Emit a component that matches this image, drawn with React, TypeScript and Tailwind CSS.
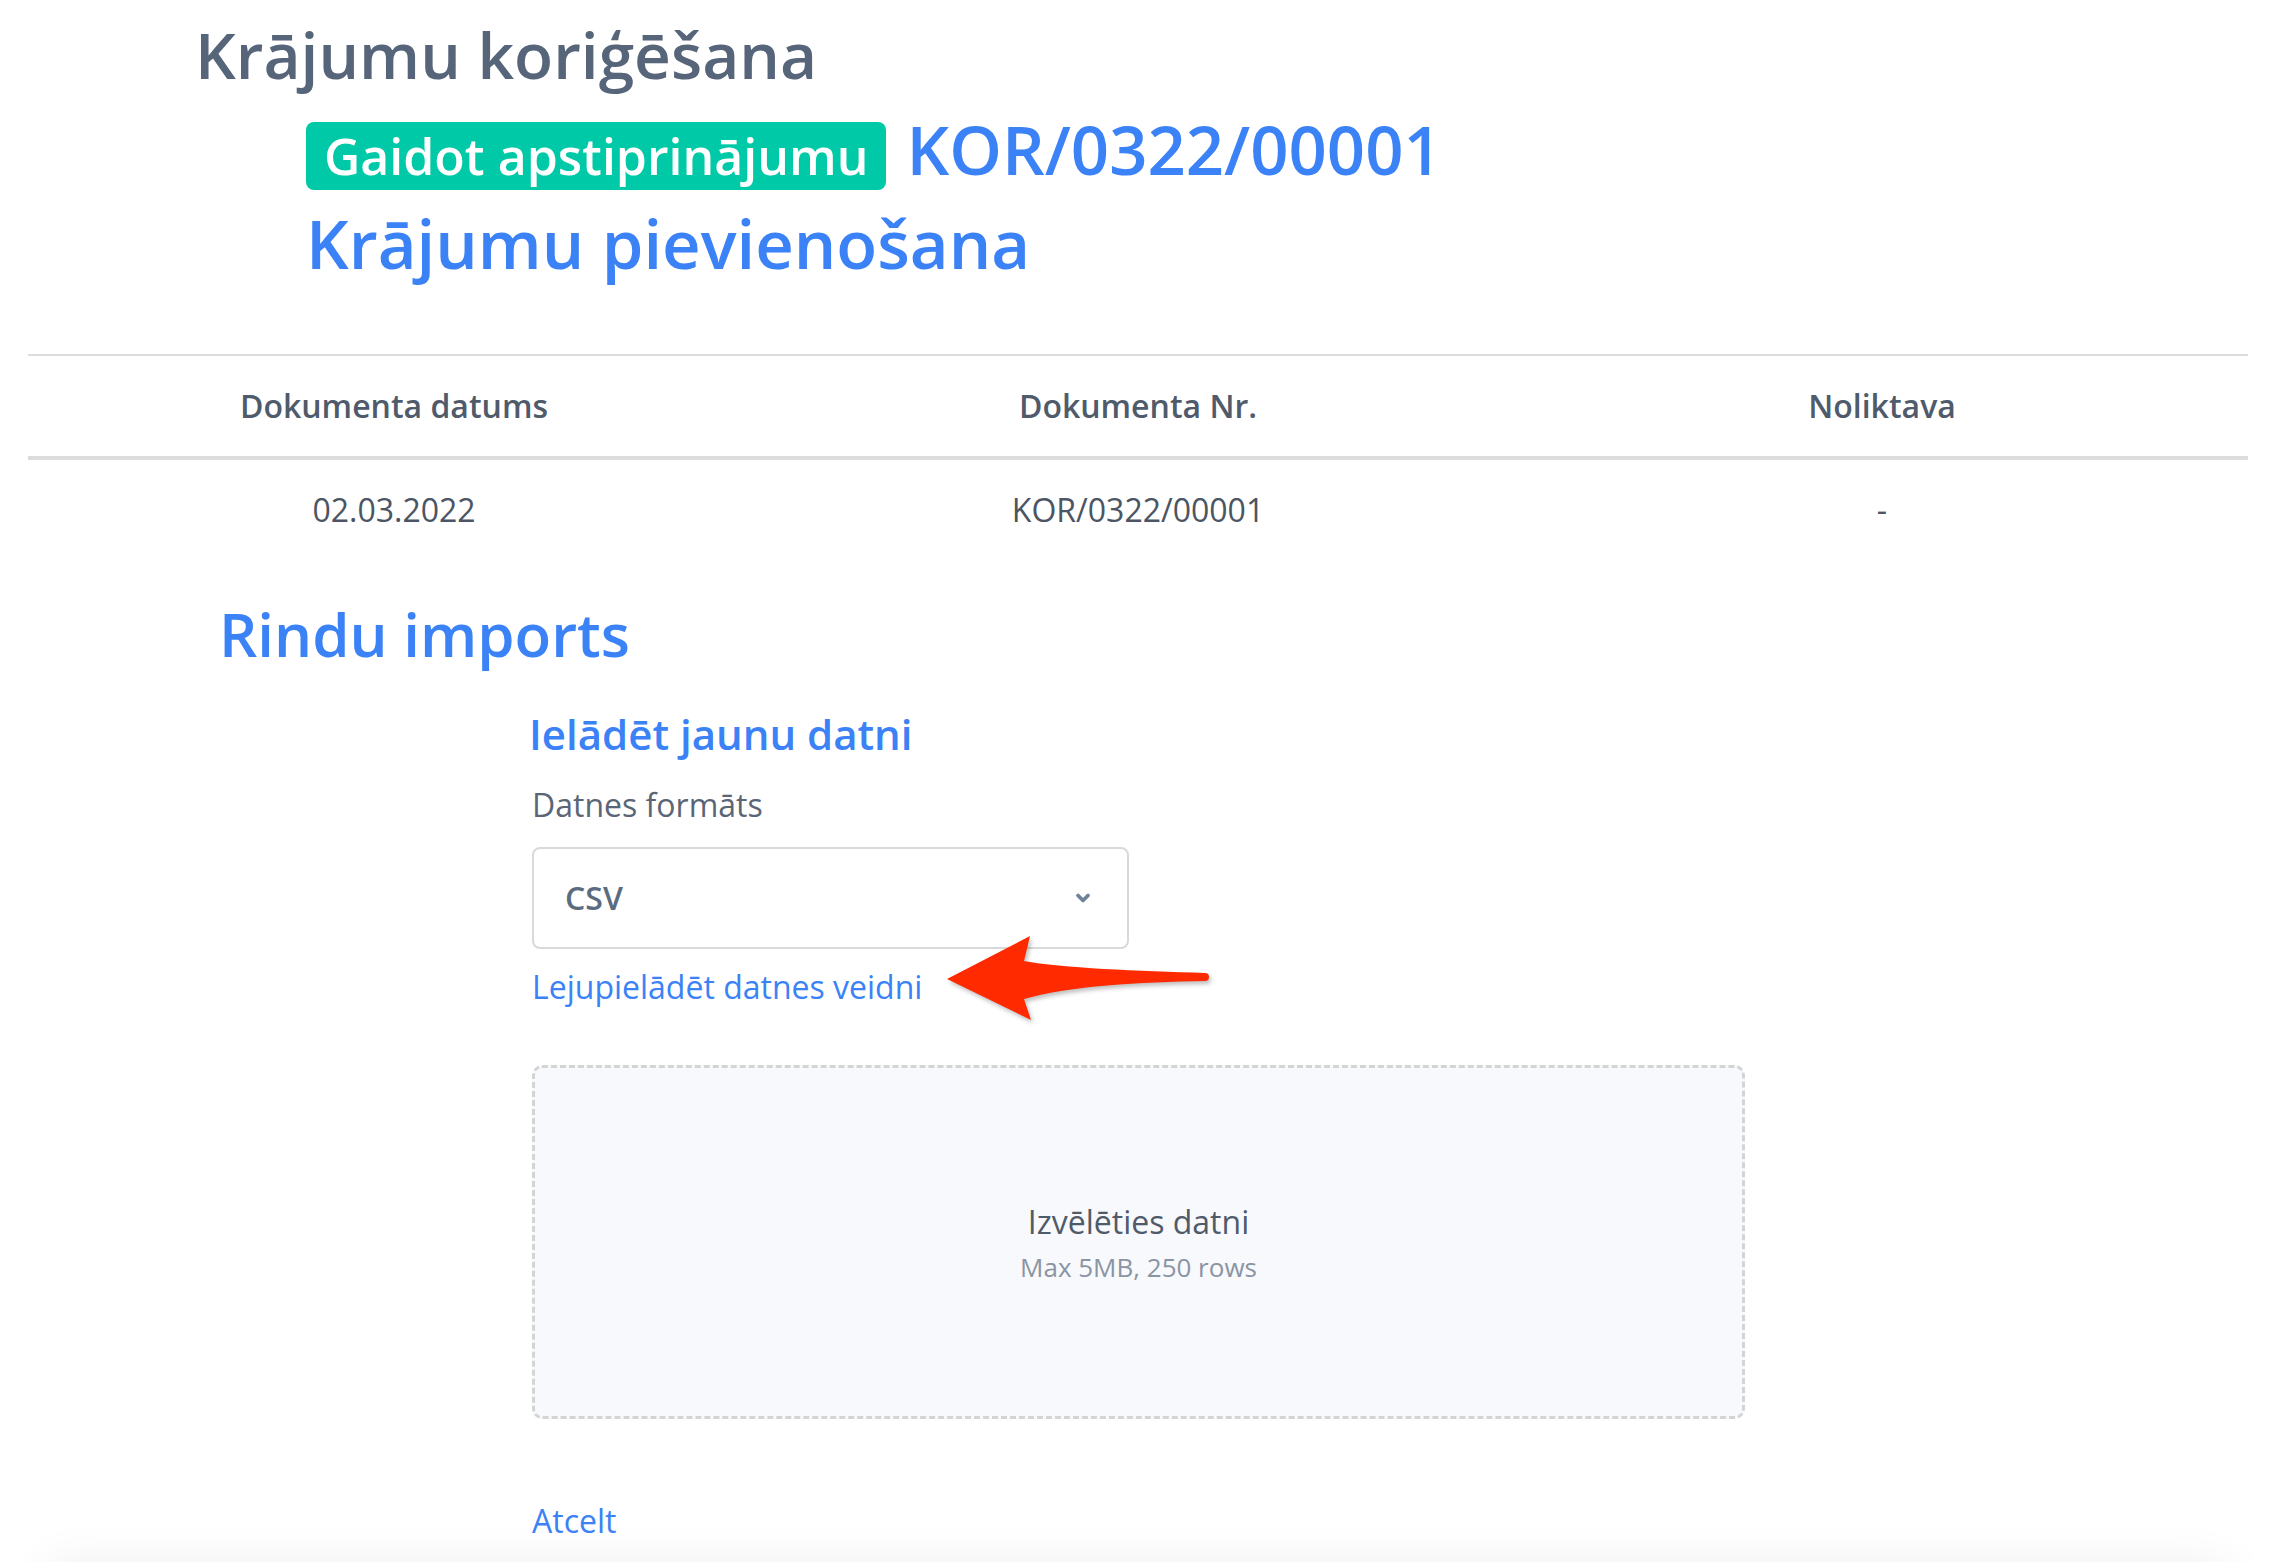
import { ChevronDown } from 'lucide-react'

const columns = [
  { label: 'Dokumenta datums', value: '02.03.2022', width: 'w-[732px]' },
  { label: 'Dokumenta Nr.', value: 'KOR/0322/00001', width: 'w-[756px]' },
  { label: 'Noliktava', value: '-', width: 'w-[732px]' },
]

function Arrow() {
  return (
    <svg
      className="absolute left-[940px] top-[928px] drop-shadow-[2px_3px_2px_rgba(0,0,0,0.25)]"
      width="280"
      height="100"
      viewBox="0 0 280 100"
    >
      <path
        d="M7 51 L90 8 L84 33 C120 40 200 43 265 45 A4 4 0 0 1 265 53 C200 54 130 58 84 71 L91 92 Z"
        fill="#ff2a00"
      />
    </svg>
  )
}

export default function App() {
  return (
    <div className="relative min-h-screen overflow-hidden bg-white font-['Open_Sans',sans-serif]">
      <header className="pt-[8px]">
        <h1 className="pl-[195px] text-[64px] font-semibold leading-[94px] text-[#566579]">
          Krājumu koriģēšana
        </h1>
        <div className="pl-[306px]">
          <div className="flex items-baseline gap-[20px]">
            <span className="rounded-[8px] bg-[#00c9a7] px-[18px] text-[50px] font-semibold leading-[68px] text-white">
              Gaidot apstiprinājumu
            </span>
            <span className="text-[67px] font-semibold leading-[94px] text-[#3b82f6]">KOR/0322/00001</span>
          </div>
          <div className="text-[67px] font-semibold leading-[94px] text-[#3b82f6]">Krājumu pievienošana</div>
        </div>
      </header>

      <div className="mx-[28px] mt-[64px]">
        <table className="w-full table-fixed border-t-2 border-[#dcdcdc] text-[32px] leading-[48px]">
          <thead>
            <tr>
              {columns.map((c) => (
                <th
                  key={c.label}
                  className={`${c.width} border-b-4 border-[#dcdcdc] py-[26px] text-center font-semibold text-[#4f5b6b]`}
                >
                  {c.label}
                </th>
              ))}
            </tr>
          </thead>
          <tbody>
            <tr>
              {columns.map((c) => (
                <td key={c.label} className="py-[26px] text-center text-[#4b5563]">
                  {c.value}
                </td>
              ))}
            </tr>
          </tbody>
        </table>
      </div>

      <section className="mt-[38px]">
        <h2 className="pl-[219px] text-[60px] font-semibold leading-[72px] text-[#3b82f6]">Rindu imports</h2>

        <div className="pl-[532px]">
          <h3 className="-ml-[3px] mt-[39px] text-[42px] font-semibold leading-[50px] text-[#3b82f6]">Ielādēt jaunu datni</h3>
          <label className="mt-[22px] block text-[32px] leading-[48px] text-[#5a6677]">Datnes formāts</label>
          <div className="mt-[18px] flex h-[102px] w-[597px] items-center justify-between rounded-[8px] border-2 border-[#d9d9d9] pl-[31px] pr-[34px]">
            <span className="text-[32px] font-semibold text-[#5b6b80]">CSV</span>
            <ChevronDown className="h-[20px] w-[20px] text-[#6f829b]" strokeWidth={4.5} />
          </div>
          <a className="mt-[14px] block text-[32px] leading-[48px] text-[#3b82f6]">Lejupielādēt datnes veidni</a>

          <div className="mt-[54px] flex h-[354px] w-[1213px] flex-col items-center justify-center rounded-[10px] border-[3px] border-dashed border-[#d4d4d4] bg-[#f8f9fc]">
            <div className="text-[32px] leading-[48px] text-[#505b6a]">Izvēlēties datni</div>
            <div className="mt-[2px] text-[26px] leading-[38px] text-[#8a94a3]">Max 5MB, 250 rows</div>
          </div>

          <a className="mt-[78px] block text-[32px] leading-[48px] text-[#3b82f6]">Atcelt</a>
        </div>
      </section>

      <div className="mx-[43px] mt-[20px] h-[120px] rounded-t-[24px] bg-white shadow-[0_0_50px_rgba(0,0,0,0.07)]" />

      <Arrow />
    </div>
  )
}
